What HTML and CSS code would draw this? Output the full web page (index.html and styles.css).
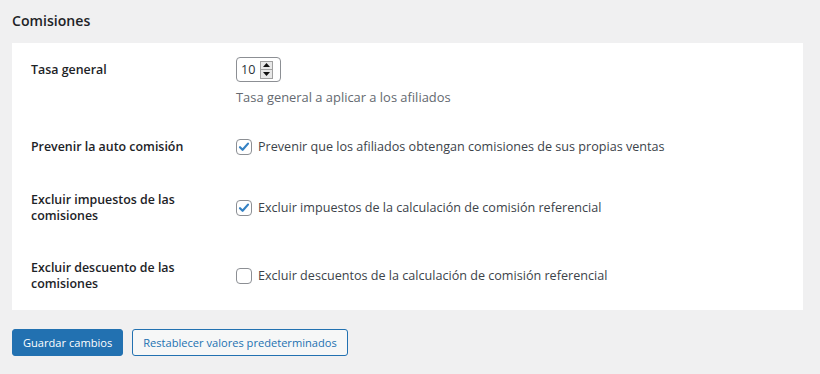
FILE: index.html
```html
<!DOCTYPE html>
<html lang="es">
<head>
    <meta charset="UTF-8">
    <title>Comisiones</title>
    <link rel="stylesheet" href="styles.css">
</head>
<body>
    <h2 class="section-title">Comisiones</h2>
    <div class="panel">
        <div class="row row-top">
            <div class="label">Tasa general</div>
            <div class="field">
                <div class="number">
                    <span class="number-value">10</span>
                    <span class="spin">
                        <span class="spin-btn"><svg width="7" height="4" viewBox="0 0 7 4"><path d="M3.5 0L7 4H0z" fill="#111"/></svg></span>
                        <span class="spin-btn"><svg width="7" height="4" viewBox="0 0 7 4"><path d="M0 0h7L3.5 4z" fill="#111"/></svg></span>
                    </span>
                </div>
                <p class="desc">Tasa general a aplicar a los afiliados</p>
            </div>
        </div>
        <div class="row">
            <div class="label">Prevenir la auto comisión</div>
            <label class="check">
                <span class="box"><svg width="14" height="14" viewBox="0 0 14 14"><path d="M3 7.2l2.6 2.6L11 3.6" fill="none" stroke="#3582c4" stroke-width="2.2" stroke-linecap="round" stroke-linejoin="round"/></svg></span>
                Prevenir que los afiliados obtengan comisiones de sus propias ventas
            </label>
        </div>
        <div class="row">
            <div class="label">Excluir impuestos de las comisiones</div>
            <label class="check">
                <span class="box"><svg width="14" height="14" viewBox="0 0 14 14"><path d="M3 7.2l2.6 2.6L11 3.6" fill="none" stroke="#3582c4" stroke-width="2.2" stroke-linecap="round" stroke-linejoin="round"/></svg></span>
                Excluir impuestos de la calculación de comisión referencial
            </label>
        </div>
        <div class="row">
            <div class="label">Excluir descuento de las comisiones</div>
            <label class="check">
                <span class="box"></span>
                Excluir descuentos de la calculación de comisión referencial
            </label>
        </div>
    </div>
    <div class="actions">
        <button class="button button-primary" type="button">Guardar cambios</button>
        <button class="button button-secondary" type="button">Restablecer valores predeterminados</button>
    </div>
</body>
</html>
```

FILE: styles.css
```css
body {
    font-family: "Open Sans", "Noto Sans", sans-serif;
    margin: 0;
    padding: 0 17px 0 12px;
    background-color: #f0f0f1;
    color: #3c434a;
    font-size: 12.6px;
}
.section-title {
    font-size: 14.1px;
    font-weight: 600;
    color: #1d2327;
    margin: 0;
    padding-top: 10px;
    line-height: 21px;
    height: 33px;
}
.panel {
    background-color: #ffffff;
    padding: 14px 19px 0;
}
.row {
    display: grid;
    grid-template-columns: 205px 1fr;
    align-items: center;
    padding: 18px 0;
}
.row-top {
    align-items: start;
    padding-top: 0;
    padding-bottom: 14px;
}
.label {
    font-size: 12.4px;
    font-weight: 600;
    color: #1d2327;
    line-height: 16px;
    padding-right: 28px;
}
.row-top .label {
    padding-top: 5px;
}
.number {
    display: flex;
    align-items: center;
    height: 23px;
    border: 1px solid #8c8f94;
    border-radius: 4px;
    padding-left: 4px;
    width: 39px;
    color: #2c3338;
    font-size: 12.6px;
}
.number-value {
    flex: 1;
}
.spin {
    display: flex;
    flex-direction: column;
    width: 11px;
    height: 16px;
    margin-right: 7px;
    border: 1px solid #a0a0a0;
    background-color: #e8e8e8;
}
.spin-btn {
    flex: 1;
    display: flex;
    align-items: center;
    justify-content: center;
}
.spin-btn + .spin-btn {
    border-top: 1px solid #a0a0a0;
}
.desc {
    margin: 6px 0 0;
    line-height: 18px;
    color: #646970;
    font-size: 12.9px;
}
.check {
    display: flex;
    align-items: center;
    gap: 6px;
    line-height: 18px;
}
.box {
    width: 14px;
    height: 14px;
    border: 1px solid #8c8f94;
    border-radius: 4px;
    background-color: #ffffff;
    display: flex;
}
.actions {
    display: flex;
    gap: 9px;
    margin-top: 19px;
}
.button {
    font-family: inherit;
    font-size: 11.1px;
    height: 27px;
    padding: 0 10px;
    border-radius: 3px;
    border: 1px solid #2271b1;
    cursor: pointer;
}
.button-primary {
    background-color: #2271b1;
    color: #ffffff;
}
.button-secondary {
    background-color: #f6f7f7;
    color: #2271b1;
}
```
